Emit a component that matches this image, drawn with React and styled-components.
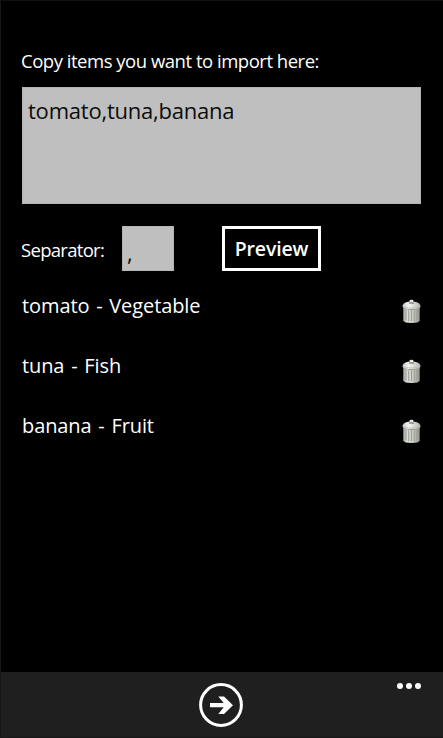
import { useState } from "react";
import styled, { createGlobalStyle } from "styled-components";

const GlobalStyle = createGlobalStyle`
  * {
    box-sizing: border-box;
  }
  body {
    margin: 0;
    background: #000;
    color: #fff;
    font-family: "Open Sans", "Noto Sans", sans-serif;
  }
`;

const Page = styled.main`
  display: flex;
  flex-direction: column;
  height: 738px;
  border-left: 1px solid #161616;
  border-top: 1px solid #111;
  background: #000;
  overflow: hidden;
`;
const Content = styled.div`
  flex: 1;
  padding: 46px 22px 0 21px;
`;
const Label = styled.label`
  display: block;
  margin-left: -1px;
  font-size: 18.5px;
  line-height: 28px;
  letter-spacing: ${(p) => p.$spacing};
  white-space: nowrap;
`;
const ImportBox = styled.textarea`
  display: block;
  width: 399px;
  height: 117px;
  margin-top: 12px;
  padding: 7px 5px;
  border: 1px solid #b4b4b4;
  border-radius: 0;
  outline: none;
  resize: none;
  background: #bfbfbf;
  color: #0c0c0c;
  font: 22px/30px "Open Sans", "Noto Sans", sans-serif;
  letter-spacing: -0.22px;
`;
const SeparatorRow = styled.div`
  display: flex;
  align-items: center;
  margin-top: 22px;
  height: 45px;
`;
const SeparatorLabel = styled(Label)`
  width: 101px;
  padding-top: 2px;
`;
const SeparatorInput = styled.input`
  width: 52px;
  height: 45px;
  padding: 6px 4px 0;
  border: 1px solid #b4b4b4;
  border-radius: 0;
  outline: none;
  background: #bfbfbf;
  color: #0c0c0c;
  font: 22px "Open Sans", "Noto Sans", sans-serif;
`;
const PreviewButton = styled.button`
  width: 99px;
  height: 45px;
  margin-left: 48px;
  padding: 0;
  border: 3px solid #fff;
  background: #000;
  color: #fff;
  font: 600 19.5px/36px "Open Sans", "Noto Sans", sans-serif;
  letter-spacing: -0.15px;
`;
const ItemList = styled.ul`
  margin: 5px 0 0;
  padding: 0;
  list-style: none;
`;
const Item = styled.li`
  display: flex;
  justify-content: space-between;
  align-items: flex-start;
  height: 60px;
  font-size: 20px;
  line-height: 60px;
  letter-spacing: -0.1px;
  word-spacing: 1.7px;
`;
const DeleteButton = styled.button`
  display: flex;
  margin-top: 23px;
  padding: 0;
  border: 0;
  background: none;
`;
const AppBar = styled.footer`
  display: grid;
  grid-template-columns: 1fr 44px 1fr;
  align-items: start;
  height: 66px;
  padding-right: 2px;
  background: #1f1f1f;
  border-bottom: 1px solid #181818;
`;
const BarButton = styled.button`
  display: flex;
  grid-column: 2;
  margin-top: 11px;
  padding: 0;
  border: 0;
  background: none;
`;
const MoreButton = styled.button`
  display: flex;
  justify-self: end;
  gap: 3px;
  margin: 11px 20px 0 0;
  padding: 0;
  border: 0;
  background: none;
`;
const Dot = styled.span`
  width: 6px;
  height: 6px;
  border-radius: 50%;
  background: #fff;
`;

function TrashIcon() {
  return (
    <svg width="19" height="25" viewBox="0 0 19 25">
      <defs>
        <linearGradient id="can">
          <stop offset="0" stopColor="#a5a8a1" />
          <stop offset="0.25" stopColor="#dcded8" />
          <stop offset="0.6" stopColor="#c8cac4" />
          <stop offset="1" stopColor="#92958e" />
        </linearGradient>
        <linearGradient id="lid">
          <stop offset="0" stopColor="#c9cbc6" />
          <stop offset="0.35" stopColor="#f5f5f2" />
          <stop offset="1" stopColor="#b3b5b0" />
        </linearGradient>
      </defs>
      <path d="M1.3 7H17.7V21.5Q17 24 9.5 24T1.3 21.5Z" fill="url(#can)" />
      <path
        d="M4 11V21.3M6.7 11.5V22M9.5 11.5V22M12.3 11.5V22M15 11V21.3"
        stroke="#9a9d96"
        strokeWidth="1"
      />
      <path d="M1.2 9.3Q9.5 12 17.8 9.3" fill="none" stroke="#8b8e88" />
      <path
        d="M.6 6.4Q1.8 2.7 9.5 2.5Q17.2 2.7 18.4 6.4V8Q16.5 10.1 9.5 10.1T.6 8Z"
        fill="url(#lid)"
      />
      <path
        d="M1 7.2Q4 9 9.5 9T18 7.2"
        fill="none"
        stroke="#b5b7b2"
        strokeWidth=".7"
      />
      <path d="M6.6 4.7Q7.4 2.6 9.5 2.6T12.4 4.7Z" fill="#8a8c87" />
      <ellipse cx="9.5" cy="2" rx="2.1" ry="1.3" fill="#e8e9e5" />
    </svg>
  );
}

function NextIcon() {
  return (
    <svg width="44" height="44" viewBox="0 0 44 44">
      <circle
        cx="22"
        cy="22"
        r="20.4"
        fill="none"
        stroke="#fff"
        strokeWidth="3"
      />
      <path
        d="M11 20H24.7L19.3 13.5H25L34 22.2L25 31H19.3L24.7 24.3H11Z"
        fill="#fff"
      />
    </svg>
  );
}

const items = [
  { name: "tomato", category: "Vegetable" },
  { name: "tuna", category: "Fish" },
  { name: "banana", category: "Fruit" },
];

export default function App() {
  const [text, setText] = useState("tomato,tuna,banana");
  const [separator, setSeparator] = useState(",");

  return (
    <Page>
      <GlobalStyle />
      <Content>
        <Label htmlFor="import" $spacing="-0.48px">
          Copy items you want to import here:
        </Label>
        <ImportBox
          id="import"
          spellCheck={false}
          value={text}
          onChange={(e) => setText(e.target.value)}
        />
        <SeparatorRow>
          <SeparatorLabel htmlFor="separator" $spacing="-0.7px">
            Separator:
          </SeparatorLabel>
          <SeparatorInput
            id="separator"
            value={separator}
            onChange={(e) => setSeparator(e.target.value)}
          />
          <PreviewButton>Preview</PreviewButton>
        </SeparatorRow>
        <ItemList>
          {items.map((item) => (
            <Item key={item.name}>
              <span>
                {item.name} - {item.category}
              </span>
              <DeleteButton aria-label="Delete">
                <TrashIcon />
              </DeleteButton>
            </Item>
          ))}
        </ItemList>
      </Content>
      <AppBar>
        <BarButton aria-label="Next">
          <NextIcon />
        </BarButton>
        <MoreButton aria-label="More">
          <Dot />
          <Dot />
          <Dot />
        </MoreButton>
      </AppBar>
    </Page>
  );
}
